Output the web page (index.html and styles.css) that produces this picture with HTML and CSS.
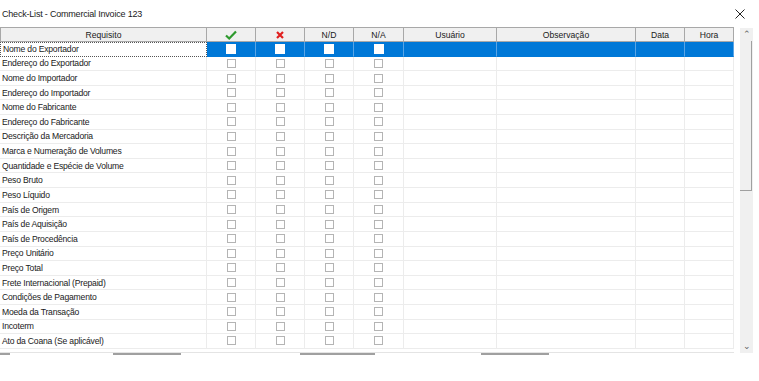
FILE: index.html
```html
<!DOCTYPE html>
<html>
<head>
  <meta charset="UTF-8">
  <title>Check-List</title>
  <link rel="stylesheet" href="styles.css">
</head>
<body>
  <div class="titlebar">
    <span class="title">Check-List - Commercial Invoice 123</span>
    <svg class="close" width="10" height="10" viewBox="0 0 10 10"><path d="M0.5 0.5L9.5 9.5M9.5 0.5L0.5 9.5" stroke="#222" stroke-width="1"/></svg>
  </div>
  <div class="frame">
    <div class="grid">
      <div class="row head">
        <div class="hc">Requisito</div>
        <div class="hc"><svg width="12" height="10" viewBox="0 0 12 10"><path d="M1 5.5L4.2 8.5L11 1.5" stroke="#2e9a2e" stroke-width="2.2" fill="none"/></svg></div>
        <div class="hc"><svg width="8" height="8" viewBox="0 0 8 8"><path d="M1 1L7 7M7 1L1 7" stroke="#e02020" stroke-width="2.2"/></svg></div>
        <div class="hc">N/D</div>
        <div class="hc">N/A</div>
        <div class="hc">Usuário</div>
        <div class="hc">Observação</div>
        <div class="hc">Data</div>
        <div class="hc">Hora</div>
      </div>
      <div id="rows"></div>
      <div class="hscroll">
        <span class="seg" style="left:0;width:10px"></span>
        <span class="seg" style="left:113px;width:68px"></span>
        <span class="seg" style="left:300px;width:75px"></span>
        <span class="seg" style="left:481px;width:68px"></span>
      </div>
    </div>
    <div class="vscroll">
      <div class="arrow">&#8963;</div>
      <div class="thumb"></div>
      <div class="track"></div>
      <div class="arrow down">&#8964;</div>
    </div>
  </div>
  <script>
    const items = [
      'Nome do Exportador', 'Endereço do Exportador', 'Nome do Importador',
      'Endereço do Importador', 'Nome do Fabricante', 'Endereço do Fabricante',
      'Descrição da Mercadoria', 'Marca e Numeração de Volumes',
      'Quantidade e Espécie de Volume', 'Peso Bruto', 'Peso Líquido',
      'País de Origem', 'País de Aquisição', 'País de Procedência',
      'Preço Unitário', 'Preço Total', 'Frete Internacional (Prepaid)',
      'Condições de Pagamento', 'Moeda da Transação', 'Incoterm',
      'Ato da Coana (Se aplicável)'
    ];
    const box = '<div class="c"><span class="cb"></span></div>';
    const rows = document.getElementById('rows');
    items.forEach((name, i) => {
      const r = document.createElement('div');
      r.className = 'row' + (i === 0 ? ' sel' : '');
      r.innerHTML = `<div class="c name">${name}</div>${box}${box}${box}${box}<div class="c"></div><div class="c"></div><div class="c"></div><div class="c"></div>`;
      rows.appendChild(r);
    });
  </script>
</body>
</html>
```

FILE: styles.css
```css
body { margin: 0; background: #fff; font-family: "Liberation Sans", Arial, sans-serif; font-size: 8.6px; letter-spacing: -0.2px; color: #1a1a1a; }
.titlebar { height: 27px; display: flex; align-items: center; justify-content: space-between; padding: 0 14px 0 2px; font-size: 9px; }
.frame { display: flex; }
.grid { width: 734px; }
.row { display: grid; grid-template-columns: 207px 49px 49px 49px 50px 93px 139px 49px 49px; height: 14.62px; }
.row .c { border-right: 1px solid #ececec; border-bottom: 1px solid #ececec; display: flex; align-items: center; justify-content: center; }
.row .name { justify-content: flex-start; padding-left: 2px; white-space: nowrap; }
.head { height: 15px; }
.hc { background: #f0f0f0; border-top: 1px solid #a8a8a8; border-bottom: 1px solid #a8a8a8; border-right: 1px solid #a8a8a8; display: flex; align-items: center; justify-content: center; box-sizing: border-box; letter-spacing: 0; }
.hc:first-child { border-left: 1px solid #a8a8a8; }
.cb { width: 9px; height: 9px; border: 1px solid #b4b4b4; background: #fff; box-sizing: border-box; }
.sel .c { background: #0078d7; border-right-color: #5aa5e6; border-bottom-color: #0078d7; }
.sel .cb { border-color: #fff; width: 10px; height: 10px; }
.sel .name { background: #fff; border: 1px dotted #555; box-sizing: border-box; }
.hscroll { position: relative; height: 4px; margin-top: 3px; border-top: 1px solid #e4e4e4; }
.hscroll .seg { position: absolute; top: 0; height: 2px; background: #a0a0a0; }
.vscroll { width: 13px; margin-left: 6px; background: #f0f0f0; display: flex; flex-direction: column; height: 325px; margin-top: 1px; }
.arrow { height: 13px; text-align: center; font-size: 9px; line-height: 13px; color: #606060; }
.thumb { height: 150px; background: #f0f0f0; border: 1px solid #a0a0a0; border-top: none; border-left: none; margin: 0 1px 0 0; box-sizing: border-box; }
.track { flex: 1; }
```
